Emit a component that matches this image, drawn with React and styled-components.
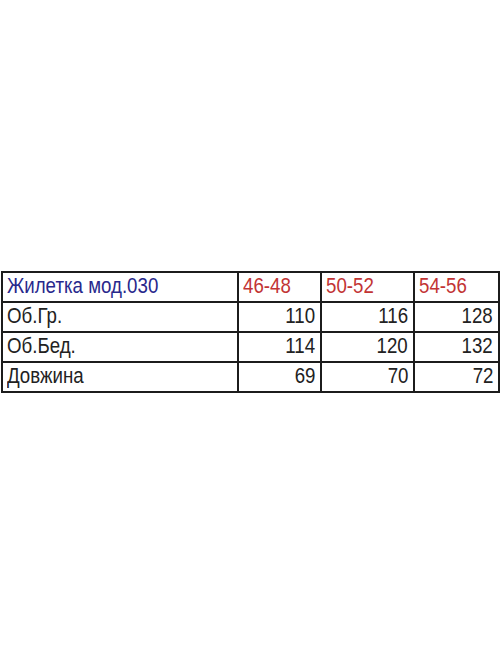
import React from 'react';
import styled, { createGlobalStyle } from 'styled-components';

const Global = createGlobalStyle`
  html, body {
    margin: 0;
    padding: 0;
    background: #fff;
  }
`;

const Page = styled.div`
  width: 500px;
  height: 667px;
  display: flex;
  align-items: flex-start;
  padding: 271px 0 0 1px;
  box-sizing: border-box;
  font-family: "Liberation Sans", Arial, sans-serif;
`;

const Table = styled.table`
  border-collapse: collapse;
  table-layout: fixed;
  width: 497px;
`;

const Cell = styled.td`
  border: 2px solid #1c1c1c;
  height: 27px;
  padding: 0 5px 0 4px;
  box-sizing: border-box;
  text-align: ${p => (p.$right ? 'right' : 'left')};
  vertical-align: bottom;
  line-height: 26px;
  white-space: nowrap;
  overflow: hidden;
`;

const Txt = styled.span`
  display: inline-block;
  font-size: 22px;
  color: ${p => p.$color || '#222'};
  transform: scaleX(0.85);
  transform-origin: ${p => (p.$right ? 'right' : 'left')} center;
`;

const sizes = ['46-48', '50-52', '54-56'];
const rows = [
  ['Об.Гр.', 110, 116, 128],
  ['Об.Бед.', 114, 120, 132],
  ['Довжина', 69, 70, 72],
];

export default function App() {
  return (
    <Page>
      <Global />
      <Table>
        <colgroup>
          <col style={{ width: 236 }} />
          <col style={{ width: 83 }} />
          <col style={{ width: 93 }} />
          <col style={{ width: 85 }} />
        </colgroup>
        <tbody>
          <tr>
            <Cell><Txt $color="#28288c">Жилетка мод.030</Txt></Cell>
            {sizes.map(s => (
              <Cell key={s}><Txt $color="#c23434">{s}</Txt></Cell>
            ))}
          </tr>
          {rows.map(([name, ...vals]) => (
            <tr key={name}>
              <Cell><Txt>{name}</Txt></Cell>
              {vals.map((v, i) => (
                <Cell key={i} $right><Txt $right>{v}</Txt></Cell>
              ))}
            </tr>
          ))}
        </tbody>
      </Table>
    </Page>
  );
}
